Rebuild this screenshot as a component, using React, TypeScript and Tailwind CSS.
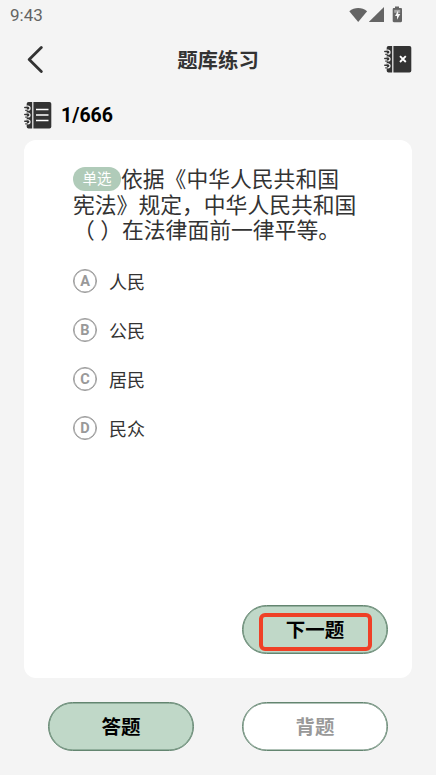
import type { ReactNode } from 'react';
import clsx from 'clsx';

const options = [
  { key: 'A', label: '人民' },
  { key: 'B', label: '公民' },
  { key: 'C', label: '居民' },
  { key: 'D', label: '民众' },
];

function StatusIcons() {
  return (
    <svg width="56" height="18" viewBox="0 0 56 18" fill="#646464">
      <path d="M0.3 5.2C5.6 0.8 12.8 0.8 18.1 5.2L9.200 16z" />
      <path d="M20 16V15.800L35 1V16z" />
      <path d="M46 2V.400h4v1.600h1.800c.7 0 1.200.5 1.200 1.200v11.800c0 .7-.5 1.200-1.200 1.200h-6.900c-.7 0-1.200-.5-1.200-1.200V3.200c0-.7.5-1.200 1.200-1.200z" />
      <path d="M45.200 3.800h6v3h-6z" fill="#f4f4f4" opacity=".45" />
      <path d="M49.200 4.200L46 10H48v3.800l3.300-5.800H49.200z" fill="#f4f4f4" />
    </svg>
  );
}

function Notebook({ children }: { children: ReactNode }) {
  return (
    <svg width="28" height="28" viewBox="0 0 28 28" fill="none">
      <path d="M4.500 1H25.500a1.800 1.800 0 0 1 1.800 1.800V25.700a1.800 1.800 0 0 1-1.800 1.800H4.500A1.800 1.800 0 0 1 2.700 25.700V2.800A1.800 1.800 0 0 1 4.500 1z" fill="#333" />
      <path d="M8.800 0V28" stroke="#f4f4f4" strokeWidth="1.200" />
      {[7.2, 14, 20.8].map((y) => (
        <g key={y}>
          <path d={`M2.500 ${y - 2}H4a2 2 0 0 1 0 4H2.500`} stroke="#f4f4f4" strokeWidth="1.200" />
          <path d={`M.3 ${y + 1.2}H2.500`} stroke="#f4f4f4" strokeWidth="2.400" />
          <path d={`M.8 ${y - .6}H3.800`} stroke="#333" strokeWidth="1.500" strokeLinecap="round" />
          <path d={`M1.500 ${y + 2.100}H3.300`} stroke="#333" strokeWidth="1" strokeLinecap="round" />
        </g>
      ))}
      {children}
    </svg>
  );
}

function PillButton({ active, children }: { active?: boolean; children: ReactNode }) {
  return (
    <button
      className={clsx(
        'relative flex h-[49px] w-[146px] items-center justify-center rounded-full border border-[#638570] pt-[2px] text-[19.5px] font-bold shadow-[inset_0_0_0_0.5px_#638570]',
        active ? 'bg-[#c0d8c8] text-black' : 'bg-white text-[#999]'
      )}
    >
      {children}
    </button>
  );
}

export default function App() {
  return (
    <div className="flex h-[775px] w-[436px] flex-col overflow-hidden bg-[#f4f4f4] font-[Roboto,'Noto_Sans_CJK_SC',sans-serif] text-[#333]">
      <div className="flex h-[30px] items-center justify-between pr-[31px] pl-[10px] text-[#646464]">
        <span className="pt-px text-[17px]">9:43</span>
        <StatusIcons />
      </div>

      <header className="flex h-[58px] items-center justify-between px-6">
        <button aria-label="返回" className="w-7">
          <svg width="28" height="28" viewBox="0 0 28 28" fill="none" stroke="#333" strokeWidth="2.800" strokeLinecap="round" strokeLinejoin="round">
            <path d="M17.300 2.500L5.200 14.500L17.300 26.500" />
          </svg>
        </button>
        <h1 className="pt-[4px] text-[20.4px] font-bold">题库练习</h1>
        <Notebook>
          <path d="M16 11.200l5.800 5.800M21.800 11.200L16 17" stroke="#fff" strokeWidth="1.900" />
        </Notebook>
      </header>

      <div className="flex h-[52px] items-center gap-[9px] px-6 pt-[2px]">
        <Notebook>
          <path d="M12 8.500H24.500M12 14H24.500M12 19.500H24.500" stroke="#fff" strokeWidth="1.700" />
        </Notebook>
        <span className="pt-[2px] text-[19.5px] font-bold text-black">1/666</span>
      </div>

      <main className="mx-6 flex h-[538px] flex-col rounded-xl bg-white pt-[27px] pr-6 pb-6 pl-[49px]">
        <div className="text-[21.8px] leading-[25.5px]">
          <div className="flex items-start">
            <span className="flex h-6 w-[48px] items-center justify-center rounded-full bg-[#b0cbb9] pt-px text-[14.5px] text-white">
              单选
            </span>
            <span>依据《中华人民共和国</span>
          </div>
          <p className="whitespace-nowrap">宪法》规定，中华人民共和国</p>
          <p className="whitespace-nowrap">（ ）在法律面前一律平等。</p>
        </div>

        <ul className="mt-[25px] flex flex-col gap-[25px]">
          {options.map((option) => (
            <li key={option.key} className="flex h-6 items-center gap-3">
              <span className="flex size-6 items-center justify-center rounded-full border border-[#999] pt-[2px] text-[14.5px] font-bold text-[#999] shadow-[inset_0_0_0_0.5px_#999]">
                {option.key}
              </span>
              <span className="pt-[3px] text-[18px]">{option.label}</span>
            </li>
          ))}
        </ul>

        <div className="mt-auto flex justify-end">
          <PillButton active>
            下一题
            <span className="absolute top-[7px] left-4 h-[38px] w-[113px] rounded-[6px] border-4 border-[#ef4026]" />
          </PillButton>
        </div>
      </main>

      <footer className="mt-6 flex justify-between px-12">
        <PillButton active>答题</PillButton>
        <PillButton>背题</PillButton>
      </footer>
    </div>
  );
}
